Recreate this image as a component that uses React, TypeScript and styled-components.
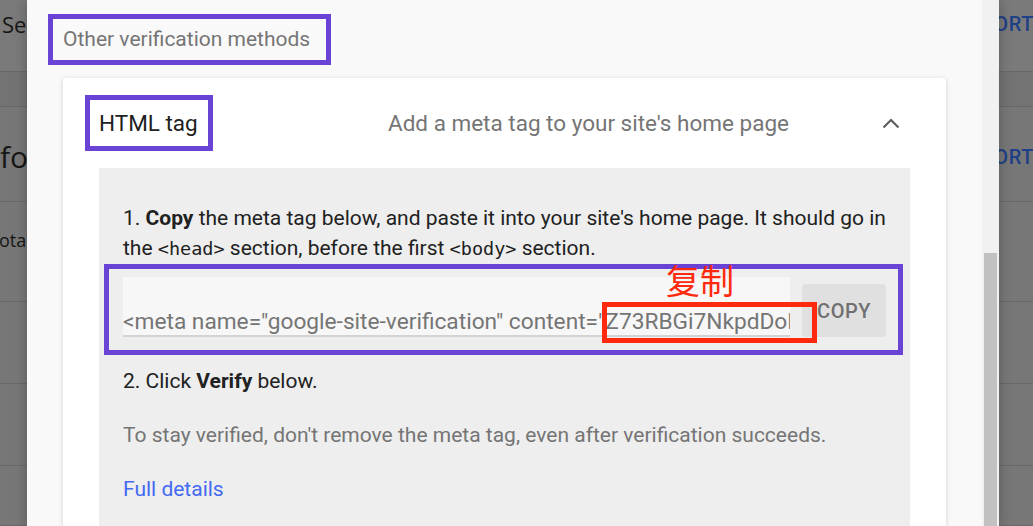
import React from 'react';
import styled, { createGlobalStyle } from 'styled-components';

const PURPLE = '#6943d5';
const RED = '#ff2a0d';

const GlobalStyle = createGlobalStyle`
	html, body {
		margin: 0;
		padding: 0;
	}
	body {
		width: 1033px;
		height: 526px;
		overflow: hidden;
		background: #777;
		font-family: Roboto, 'Noto Sans', 'Liberation Sans', sans-serif;
	}
`;

const Page = styled.div`
	position: relative;
	width: 1033px;
	height: 526px;
	overflow: hidden;
	background: #777;
`;

/* page behind the dialog, already dimmed by the backdrop */
const BgRow = styled.div<{ $h: number; $bg?: string; $pad?: number }>`
	height: ${({ $h }) => $h}px;
	box-sizing: border-box;
	padding-top: ${({ $pad }) => $pad ?? 0}px;
	background: ${({ $bg }) => $bg ?? '#777'};
	border-bottom: 1px solid #686868;
	display: flex;
	justify-content: space-between;
	align-items: flex-start;
	overflow: hidden;
`;

const BgText = styled.span<{ $size: number; $shift?: number }>`
	font-family: 'Open Sans', Roboto, sans-serif;
	font-size: ${({ $size }) => $size}px;
	line-height: 28px;
	color: #161616;
	margin-left: ${({ $shift }) => $shift ?? 0}px;
	white-space: nowrap;
`;

const BgAction = styled.span`
	font-family: Roboto, sans-serif;
	font-size: 20px;
	font-weight: 500;
	line-height: 28px;
	letter-spacing: 0.6px;
	color: #1f3f86;
	margin-right: -1px;
`;

const Modal = styled.div`
	position: absolute;
	top: 0;
	left: 27px;
	width: 972px;
	height: 526px;
	display: flex;
	background: #f9f9f9;
	box-shadow: 0 0 12px rgba(0, 0, 0, 0.25);
`;

const ModalBody = styled.div`
	flex: 1;
	min-width: 0;
	padding: 14px 36px 0;
	overflow: hidden;
`;

const Scrollbar = styled.div`
	width: 17px;
	background: #f1f1f1;
	display: flex;
	flex-direction: column;
`;

const Thumb = styled.div`
	margin: 253px 2px 0;
	flex: 1;
	background: #c1c1c1;
`;

const SectionLabel = styled.div`
	display: inline-block;
	border: 5px solid ${PURPLE};
	padding: 8px 16px 8px 10px;
	margin-left: -15px;
	font-size: 21px;
	line-height: 25px;
	color: #757575;
`;

const Card = styled.section`
	margin-top: 13px;
	background: #fff;
	border-radius: 3px;
	box-shadow: 0 1px 5px rgba(0, 0, 0, 0.16);
	padding: 0 36px;
`;

const CardHeader = styled.header`
	height: 90px;
	display: grid;
	grid-template-columns: 289px 1fr auto;
	align-items: center;
	padding-right: 10px;
`;

const MethodName = styled.h2`
	justify-self: start;
	margin: 0 0 0 -14px;
	border: 5px solid ${PURPLE};
	padding: 7px 10px 7px 9px;
	font-size: 22.5px;
	font-weight: 400;
	line-height: 32px;
	color: #212121;
`;

const Summary = styled.span`
	font-size: 22.5px;
	color: #757575;
`;

const Panel = styled.div`
	background: #eeeeee;
	padding: 35px 24px 40px;
	line-height: 30px;
	color: #212121;
`;

const Step = styled.p<{ $gap?: number }>`
	margin: ${({ $gap }) => $gap ?? 0}px 0 0;
	font-size: 21px;
`;

const Code = styled.code`
	font-family: 'DejaVu Sans Mono', 'Liberation Mono', monospace;
	font-size: 18.5px;
	line-height: 1;
`;

const CopyFrame = styled.div`
	position: relative;
	display: flex;
	align-items: flex-end;
	gap: 12px;
	border: 5px solid ${PURPLE};
	padding: 8px 12px 13px 14px;
	margin: 1px -17px 0 -19px;
`;

const MetaField = styled.div`
	flex: 1;
	min-width: 0;
	height: 60px;
	box-sizing: border-box;
	display: flex;
	align-items: flex-end;
	background: #f7f7f7;
	border-bottom: 2px solid #d3d3d3;
	overflow: hidden;
	white-space: nowrap;
	font-size: 22.7px;
	line-height: 26px;
	color: #757575;
`;

const CopyButton = styled.button`
	flex: none;
	width: 84px;
	height: 53px;
	border: none;
	border-radius: 4px;
	background: #e0e0e0;
	font-family: Roboto, sans-serif;
	font-size: 20px;
	font-weight: 500;
	letter-spacing: 0.5px;
	color: #707070;
`;

const RedMark = styled.div`
	position: absolute;
	left: 493px;
	top: 33px;
	width: 215px;
	height: 41px;
	box-sizing: border-box;
	border: 5px solid ${RED};
`;

const RedNote = styled.span`
	position: absolute;
	left: 557px;
	top: -6px;
	font-family: 'Noto Sans CJK SC', 'Noto Sans', sans-serif;
	font-size: 34px;
	line-height: 34px;
	color: ${RED};
`;

const Note = styled(Step)`
	color: #757575;
`;

const DetailsLink = styled.a`
	display: block;
	margin-top: 24px;
	font-size: 21px;
	color: #4469f2;
	text-decoration: none;
`;

function ChevronUp() {
	return (
		<svg width='18' height='12' viewBox='0 0 18 12'>
			<polyline points='1.5,10.5 9,3 16.5,10.5' fill='none' stroke='#5f5f5f' strokeWidth='2.2' />
		</svg>
	);
}

export default function App(): JSX.Element {
	return (
		<Page>
			<GlobalStyle />
			<BgRow $h={72} $bg='#7a7a7a' $pad={10}>
				<BgText $size={22} $shift={2}>
					Search Console
				</BgText>
				<BgAction>EXPORT</BgAction>
			</BgRow>
			<BgRow $h={35} $bg='#737373' />
			<BgRow $h={95} $pad={36}>
				<BgText $size={30}>found</BgText>
				<BgAction>EXPORT</BgAction>
			</BgRow>
			<BgRow $h={100} $pad={24}>
				<BgText $size={18} $shift={-11}>
					Total
				</BgText>
			</BgRow>
			<BgRow $h={82} />
			<BgRow $h={82} />
			<BgRow $h={60} />

			<Modal>
				<ModalBody>
					<SectionLabel>Other verification methods</SectionLabel>
					<Card>
						<CardHeader>
							<MethodName>HTML tag</MethodName>
							<Summary>Add a meta tag to your site&apos;s home page</Summary>
							<ChevronUp />
						</CardHeader>
						<Panel>
							<Step>
								1. <b>Copy</b> the meta tag below, and paste it into your site&apos;s home page. It should go in
								the <Code>&lt;head&gt;</Code> section, before the first <Code>&lt;body&gt;</Code> section.
							</Step>
							<CopyFrame>
								<MetaField>
									&lt;meta name=&quot;google-site-verification&quot; content=&quot;Z73RBGi7NkpdDoDq5xWmVh2LtR8sYc0uAeKfPj4nQ&quot; /&gt;
								</MetaField>
								<CopyButton>COPY</CopyButton>
								<RedMark />
								<RedNote>复制</RedNote>
							</CopyFrame>
							<Step $gap={11}>
								2. Click <b>Verify</b> below.
							</Step>
							<Note $gap={24}>
								To stay verified, don&apos;t remove the meta tag, even after verification succeeds.
							</Note>
							<DetailsLink href='#'>Full details</DetailsLink>
						</Panel>
					</Card>
				</ModalBody>
				<Scrollbar>
					<Thumb />
				</Scrollbar>
			</Modal>
		</Page>
	);
}
